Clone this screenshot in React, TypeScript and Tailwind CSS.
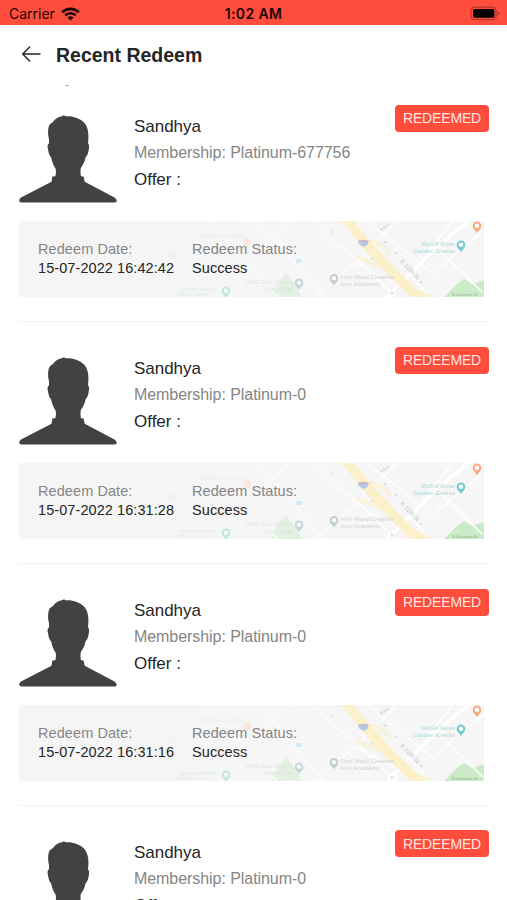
import React from "react";

type Redeem = { membership: string; date: string };

const redeems: Redeem[] = [
  { membership: "Platinum-677756", date: "15-07-2022 16:42:42" },
  { membership: "Platinum-0", date: "15-07-2022 16:31:28" },
  { membership: "Platinum-0", date: "15-07-2022 16:31:16" },
  { membership: "Platinum-0", date: "15-07-2022 16:30:52" },
];

function Wifi() {
  return (
    <svg width="19" height="14" viewBox="0 0 19 14" fill="none" stroke="#1c0705" className="ml-[6px] shrink-0">
      <path d="M1.2 5.2a11.8 11.8 0 0 1 16.6 0" strokeWidth="2.7" />
      <path d="M4.2 8.4a7.5 7.5 0 0 1 10.6 0" strokeWidth="2.5" />
      <path d="M9.5 13.4 6.5 10.6a4.3 4.3 0 0 1 6 0Z" fill="#1c0705" stroke="none" />
    </svg>
  );
}

function Battery() {
  return (
    <svg width="31" height="15" viewBox="0 0 31 15" className="shrink-0">
      <rect x="1.1" y="1.1" width="25" height="12.6" rx="3.6" fill="none" stroke="#b93629" strokeWidth="1.3" />
      <rect x="3" y="3" width="21.4" height="8.8" rx="1.8" fill="#000" />
      <path d="M27.6 5.3q2 .8 2 2.1t-2 2.1z" fill="#b93629" />
    </svg>
  );
}

function Avatar() {
  return (
    <svg width="98" height="88" viewBox="0 0 98 88" className="shrink-0" fill="#424242">
      <path d="M30 24C28.600 19 29 13 30.200 10.500C31 8.500 32.500 8 34 7C36.500 3.500 40 1.700 43.500 1.100L45 .2L46.500 1.200C54 .8 61 3 65.500 8C69.500 13 70 20 69 28.500C70.700 29.500 70.100 33 69.500 36C68.800 39.700 67.500 41.500 66.500 42.500C65.800 47 63.500 50.500 61.800 53C61.300 56 61.500 59 62 61.200L64.600 61.500L65.700 66.800L95.500 82.500Q98 84 97.700 86.500Q97 87.500 95 87.500H3Q.8 87.500 .3 86.300Q0 83.500 3 82L32.500 66.800L33.400 61.500L36.300 61.200C37 59 37.200 56 36.600 53.500C34.500 50.500 33 47 32.200 42.500C30.500 41 29.700 38 29.200 35.500C28.200 31.500 28.300 29 30 28.500Z" />
    </svg>
  );
}

function Pin({ x, y, color, opacity = 1 }: { x: number; y: number; color: string; opacity?: number }) {
  return (
    <g transform={`translate(${x} ${y})`} opacity={opacity}>
      <path d="M0 6.200C-1.200 3.500-4.300 2.200-4.300-1.200A4.300 4.300 0 0 1 4.300-1.200C4.300 2.200 1.200 3.500 0 6.200Z" fill={color} />
      <circle cy="-1.200" r="2.300" fill="#f8fbfb" />
    </g>
  );
}

function MapArt() {
  return (
    <svg width="465" height="76" viewBox="0 0 465 76" className="col-start-1 row-start-1" fontFamily="Liberation Sans, Arial, sans-serif">
      <defs>
        <linearGradient id="wash">
          <stop offset="0" stopColor="#f5f5f5" />
          <stop offset=".3" stopColor="#f5f5f5" stopOpacity=".96" />
          <stop offset=".6" stopColor="#f6f6f6" stopOpacity=".4" />
          <stop offset=".75" stopColor="#f6f6f6" stopOpacity="0" />
        </linearGradient>
      </defs>
      <rect width="465" height="76" fill="#f6f6f7" />
      <path d="M252 76 258 63 267 52 274 61 283 76Z" fill="#d5edd1" />
      <path d="M425 76 438 63 445 58 453 63 465 59V76Z" fill="#cbebc8" />
      <g stroke="#fff" fill="none" strokeWidth="2">
        <path d="M368 76 418 26 452 -2" strokeWidth="3.500" />
        <path d="M296 0 314 20 342 42 376 76M296 76 336 42 378 0M235 34 271 0M235 0 259 22 304 76M408 32 434 0M391 54 411 76M418 27 464 72M418 48 464 10M150 76 225 0M190 0 258 76" strokeOpacity=".75" />
        <path d="M336 42 404 76M348 0 418 56" strokeWidth="1.500" strokeOpacity=".75" />
      </g>
      <g fill="none" stroke="#fcf0c8">
        <path d="M326 -3 348 24 374 52 402 79" strokeWidth="10" />
        <path d="M337 36 370 48M350 20Q364 21 371 33" strokeWidth="4" strokeOpacity=".6" />
        <path d="M387 67 412 76" strokeWidth="5" strokeOpacity=".6" />
      </g>
      <g fill="#dcddde">
        <circle cx="313" cy="11" r="1.200" /><circle cx="366" cy="21" r="1.200" />
        <circle cx="377" cy="32" r="1.200" /><circle cx="353" cy="38" r="1.300" />
        <circle cx="402" cy="61" r="1.200" /><circle cx="373" cy="72" r="1.300" />
      </g>
      <path d="M339 20Q344 17.500 349.500 20L348.500 24 344.500 26 340 23.500Z" fill="#b3c5e6" />
      <path d="M339.500 19.500h10v1.500h-10z" fill="#cfb3c0" />
      <text x="381" y="41" fontSize="6" fill="#c3c5c8" transform="rotate(46 381 41)">E 12th St</text>
      <text x="362" y="10" fontSize="3.600" fill="#c3c5c8" transform="rotate(-34 362 10)">N Brev</text>
      <g fill="#a7d9d8" fontSize="6.200" textAnchor="end">
        <text x="436" y="24.500" textLength="34">McGill Rose</text>
        <text x="436" y="31.500" textLength="42">Garden Events</text>
      </g>
      <g fill="#ccd1d5" fontSize="6.200">
        <text x="321" y="57.500" textLength="54">First Ward Creative</text>
        <text x="321" y="64.500" textLength="40">Arts Academy</text>
      </g>
      <text x="433" y="74.500" fontSize="4" fill="#94ab93">N Davidson St</text>
      <g fill="#c5d2d0" fontSize="6" textAnchor="end">
        <text x="274" y="62.500">AME Zion Church</text>
        <text x="274" y="69.500">Grace Hall</text>
      </g>
      <path d="M277 38h6v4h-6z" fill="#b9e3f7" />
      <rect width="465" height="76" fill="url(#wash)" />
      <Pin x={458} y={6} color="#f8ab83" />
      <Pin x={442} y={25} color="#76cbcb" />
      <Pin x={315} y={58.500} color="#bfcdd4" />
      <Pin x={280} y={63} color="#c3d5d6" />
      <Pin x={207} y={71} color="#b5e3df" opacity={0.8} />
      <circle cx="228" cy="21" r="4" fill="#fbe7dd" />
      <circle cx="153" cy="35" r="4" fill="#ecf3f2" />
      <g fill="#e1ecea" fontSize="5.500">
        <text x="160" y="70">Uptown Market</text>
        <text x="155" y="74.500" fontSize="4.500">Charlotte Center</text>
      </g>
      <text x="180" y="17" fontSize="5.500" fill="#f5ebe6">The Fillmore Music</text>
    </svg>
  );
}

function RedeemCard({ item }: { item: Redeem }) {
  return (
    <article className="mx-[19px] flex h-[241.9px] shrink-0 flex-col">
      <div className="flex h-[141px] w-[470px] shrink-0">
        <div className="pt-[35px]"><Avatar /></div>
        <div className="ml-[17px] flex-1 whitespace-nowrap pt-[34px]">
          <div className="h-[26px] text-[17px] leading-[26px] tracking-[-0.03px] text-[#252525]">Sandhya</div>
          <div className="h-[26px] text-[16px] leading-[26px] tracking-[-0.06px] text-[#858585]">Membership: {item.membership}</div>
          <div className="h-[27px] text-[17px] leading-[27px] text-[#252525]">Offer :</div>
        </div>
        <div className="mt-[24.500px] flex h-[27px] w-[94px] items-center justify-center rounded-[4px] bg-[#fe4d3d] pt-px text-[14px] tracking-[-0.15px] text-[#ffe6e2]">REDEEMED</div>
      </div>
      <div className="grid h-[76px] w-[465px] shrink-0 overflow-hidden rounded-[2px]">
        <MapArt />
        <div className="z-10 col-start-1 row-start-1 flex whitespace-nowrap pl-[19px] pt-[18px] text-[14.500px] leading-[20px] tracking-[0.08px]">
          <div className="w-[154px]">
            <div className="h-[19px] text-[#858585]">Redeem Date:</div>
            <div className="h-[20px] text-[#252525]">{item.date}</div>
          </div>
          <div>
            <div className="h-[19px] text-[#858585]">Redeem Status:</div>
            <div className="h-[20px] text-[#252525]">Success</div>
          </div>
        </div>
      </div>
      <div className="mt-[24px] h-px w-[470px] bg-[#f3f3f3]" />
    </article>
  );
}

export default function App() {
  return (
    <main className="flex h-[900px] w-[507px] flex-col overflow-hidden bg-white font-['Liberation_Sans',Arial,sans-serif]">
      <div className="grid h-[25px] shrink-0 grid-cols-3 items-center bg-[#fe4d3d] pt-[2px] font-['Inter',sans-serif] text-[#1c0705]">
        <div className="flex items-center pl-[9px]"><span className="text-[14px]">Carrier</span><Wifi /></div>
        <div className="text-center text-[14px] font-semibold tracking-[0.35px]">1:02 AM</div>
        <div className="flex justify-end pr-[6px]"><Battery /></div>
      </div>
      <header className="flex h-[55px] shrink-0 items-center pl-[21px] pt-[6px]">
        <svg width="20" height="16" viewBox="0 0 20 16" fill="none" stroke="#252525" strokeWidth="1.400" strokeLinecap="round" strokeLinejoin="round" className="mt-[-4px]">
          <path d="M8.700 1 1.700 8l7 7M1.700 8H19" />
        </svg>
        <h1 className="ml-[15px] whitespace-nowrap text-[19.500px] font-bold text-[#252525]">Recent Redeem</h1>
      </header>
      <section className="grid h-[820px] shrink-0 overflow-hidden">
        <div className="col-start-1 row-start-1 ml-[65px] mt-[5px] h-px w-[4px] bg-[#b5b5b5]" />
        <div className="col-start-1 row-start-1 flex flex-col pt-[0.300px]">
          {redeems.map((item) => <RedeemCard key={item.date} item={item} />)}
        </div>
      </section>
    </main>
  );
}
